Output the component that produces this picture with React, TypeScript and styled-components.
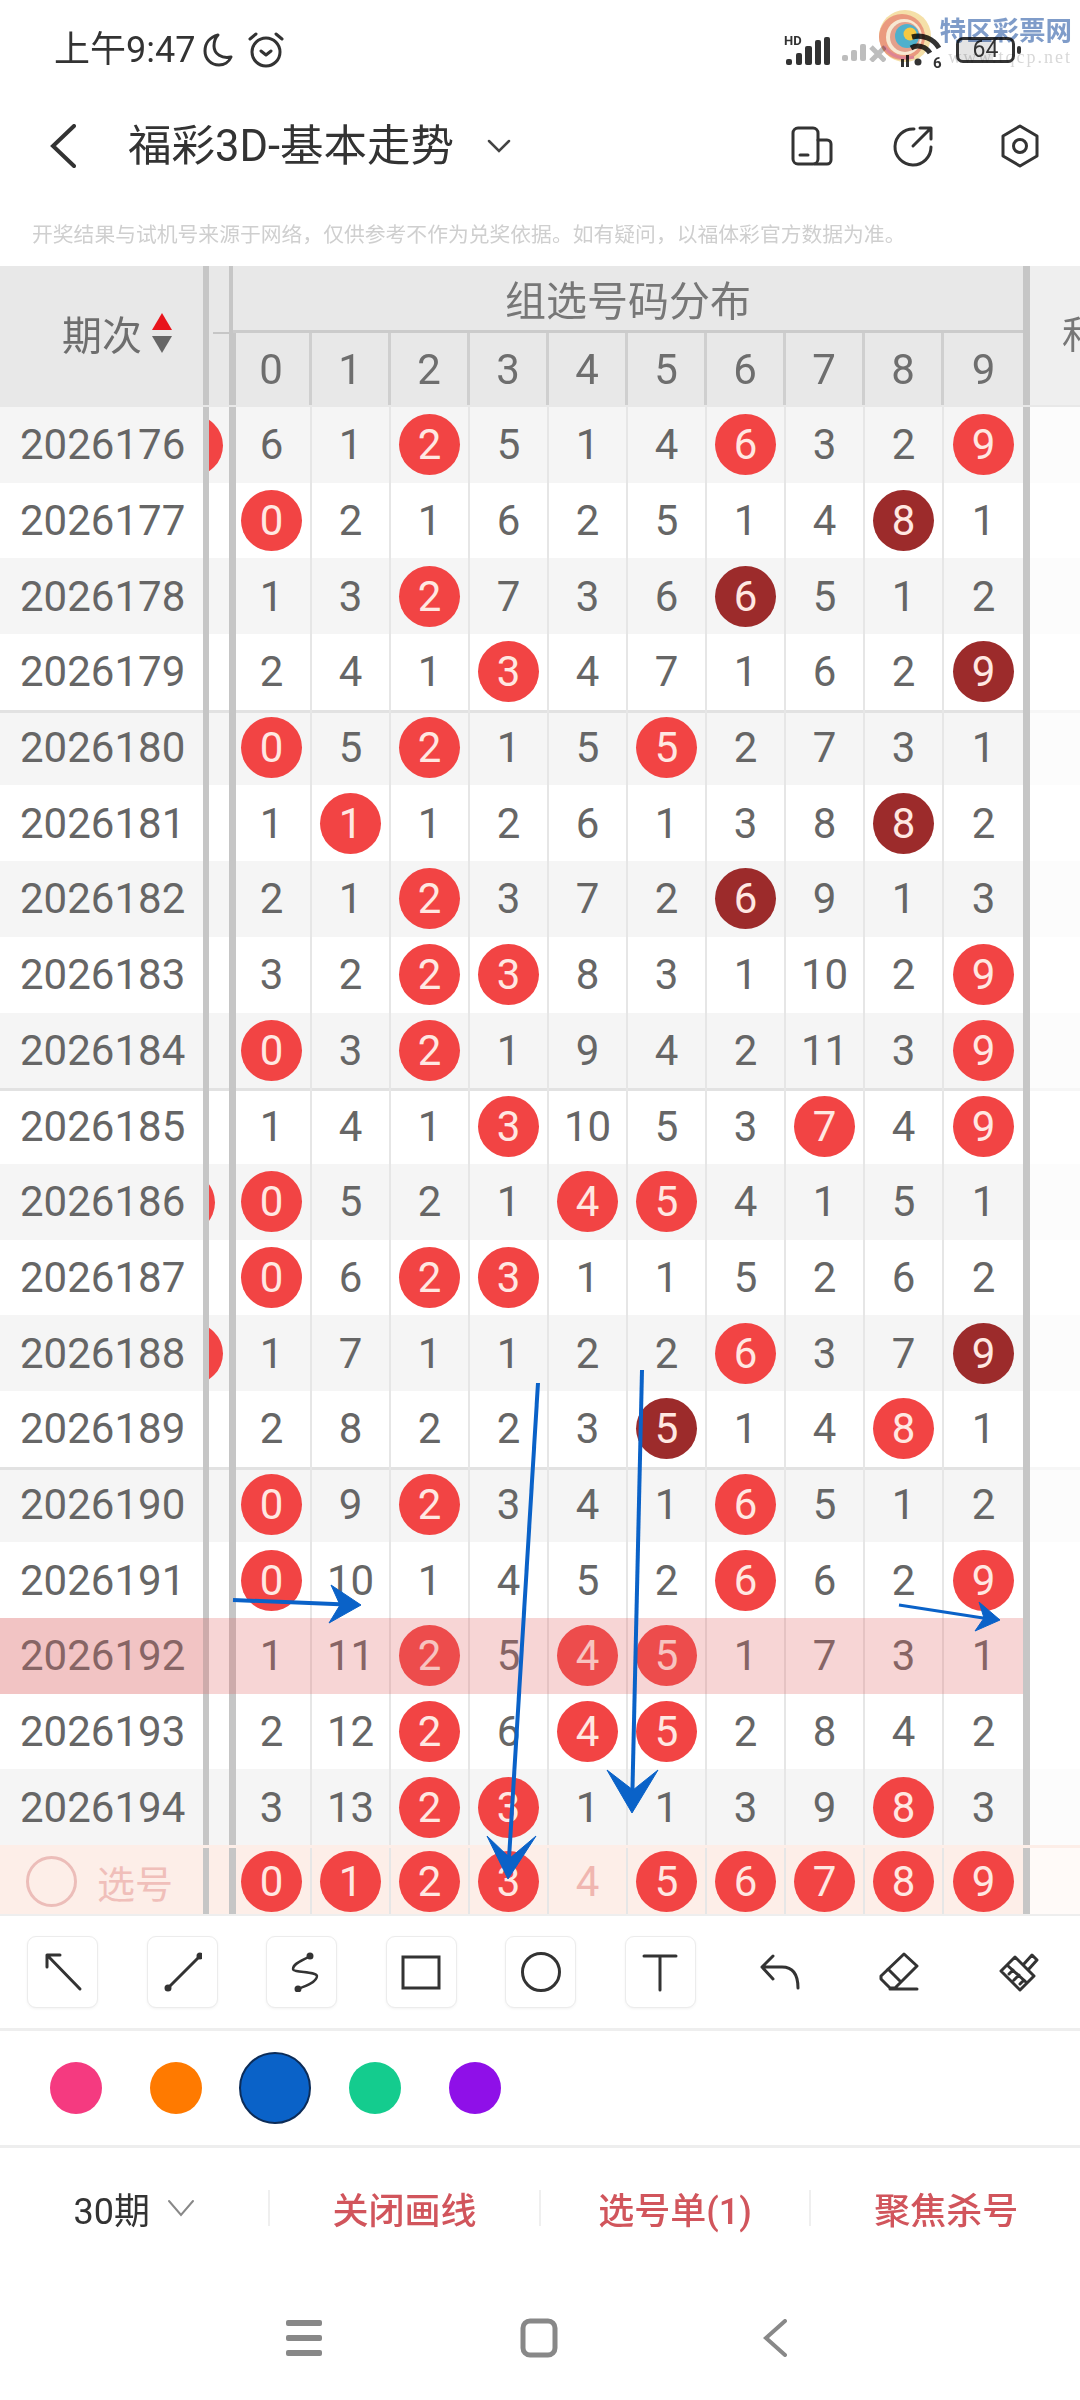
import styled, { createGlobalStyle } from "styled-components";

const CJK = `Roboto, "Noto Sans CJK SC", sans-serif`;

//#region --- Page styles ---
const GlobalStyle = createGlobalStyle`
  html, body {
    margin: 0;
    padding: 0;
    background: #fff;
    overflow: hidden;
  }
  * {
    box-sizing: border-box;
  }
`;

const Page = styled.div`
  position: relative;
  width: 1080px;
  height: 2400px;
  overflow: hidden;
  background: #fff;
  font-family: ${CJK};
  color: #333;
`;

const StatusBar = styled.header`
  display: flex;
  align-items: center;
  height: 100px;
  padding: 0 65px 0 54px;
`;

const Clock = styled.span`
  font-size: 36px;
  line-height: 1;
  color: #333;
  margin-right: 8px;
`;

const StatusIcon = styled.svg`
  display: block;
  margin-right: 14px;
`;

const StatusRight = styled.div`
  display: flex;
  align-items: center;
  gap: 12px;
  margin-left: auto;
`;

const Battery = styled.div`
  position: relative;
  width: 59px;
  height: 26px;
  border: 3px solid #333;
  border-radius: 7px;
  background: linear-gradient(90deg, #e4e4e4 64%, #fff 64%);
  font-size: 23px;
  line-height: 20px;
  text-align: center;
  color: #333;

  &::after {
    content: "";
    position: absolute;
    top: 6px;
    right: -9px;
    width: 4px;
    height: 8px;
    border-radius: 2px;
    background: #333;
  }
`;

const Watermark = styled.div`
  position: absolute;
  top: 8px;
  left: 878px;
  display: flex;
  gap: 6px;
  mix-blend-mode: multiply;
`;

const WatermarkText = styled.div`
  display: flex;
  flex-direction: column;
  align-items: flex-end;
  width: 134px;
`;

const WatermarkTitle = styled.span`
  margin-top: 7px;
  font-size: 26.5px;
  line-height: 32px;
  font-weight: 700;
  white-space: nowrap;
  color: #7f9cc9;
`;

const WatermarkUrl = styled.span`
  font-family: "Liberation Serif", serif;
  font-size: 18px;
  line-height: 20px;
  letter-spacing: 2px;
  white-space: nowrap;
  color: #d8d8d8;
`;

const NavBar = styled.nav`
  display: flex;
  align-items: center;
  height: 92px;
  padding-left: 50px;
`;

const NavTitle = styled.h1`
  margin: 2px 0 0 52px;
  font-size: 43.5px;
  line-height: 1;
  font-weight: 400;
  color: #333;
  white-space: nowrap;
`;

const NavCaret = styled.svg`
  margin-left: 33px;
`;

const NavActions = styled.div`
  display: flex;
  align-items: center;
  gap: 60px;
  margin-left: auto;
  padding-right: 40px;
`;

const HexIcon = styled.svg`
  margin-left: 5px;
`;

const Disclaimer = styled.p`
  margin: 0;
  height: 74px;
  padding: 31px 0 0 32px;
  font-size: 20.8px;
  line-height: 24px;
  color: #cfcfcf;
  white-space: nowrap;
`;

const Table = styled.section`
  width: 1080px;
`;

const HeadGrid = styled.div`
  display: grid;
  grid-template-columns: 209px 24px repeat(10, 79px) 7px 1fr;
  grid-template-rows: 67px 74px;
  height: 141px;
  background: #e8e8e8;
  color: #6e6e6e;
`;

const HeadPeriod = styled.div`
  grid-row: 1 / 3;
  display: flex;
  align-items: center;
  justify-content: flex-end;
  gap: 10px;
  height: 139px;
  padding: 0 31px 5px 0;
  border-right: 6px solid #c6c6c6;
  font-size: 40px;
`;

const SortArrows = styled.svg`
  display: block;
`;

const HeadGap = styled.div`
  grid-row: 1 / 3;
  position: relative;
  height: 139px;
  border-right: 4px solid #c6c6c6;

  &::after {
    content: "";
    position: absolute;
    top: 66px;
    left: 4px;
    right: 0;
    height: 2px;
    background: #c6c6c6;
  }
`;

const HeadTitle = styled.div`
  grid-column: 3 / 13;
  display: flex;
  align-items: center;
  justify-content: center;
  border-bottom: 3px solid #cbcbcb;
  font-size: 41px;
  color: #777;
`;

const HeadDigit = styled.div<{ $column: number }>`
  grid-row: 2;
  grid-column: ${(p) => p.$column + 3};
  display: flex;
  align-items: center;
  justify-content: center;
  height: 72px;
  border-right: ${(p) => (p.$column === 9 ? "0" : "3px solid #cfcfcf")};
  box-shadow: ${(p) => (p.$column === 0 ? "inset 3px 0 0 #c6c6c6" : "none")};
  font-size: 42px;
`;

const HeadBar = styled.div`
  grid-column: 13;
  grid-row: 1 / 3;
  height: 139px;
  background: #c6c6c6;
`;

const HeadTail = styled.div`
  grid-column: 14;
  grid-row: 1 / 3;
  height: 139px;
  padding-left: 32px;
  background: #efefef;
  font-size: 38px;
  line-height: 139px;
  white-space: nowrap;
  overflow: hidden;
  color: #777;
`;

const Row = styled.div<{ $striped: boolean; $grouped: boolean; $hot: boolean }>`
  position: relative;
  display: grid;
  grid-template-columns: 209px 24px repeat(10, 79px) 7px 1fr;
  height: 75.7px;
  background: ${(p) => (p.$striped && !p.$hot ? "#f5f5f5" : "#fff")};
  box-shadow: ${(p) => (p.$grouped ? "inset 0 3px 0 #e2e2e2" : "none")};

  ${(p) =>
    p.$hot &&
    `
    &::after {
      content: "";
      position: absolute;
      top: 0;
      bottom: 0;
      left: 0;
      width: 1023px;
      background: rgba(225, 100, 100, 0.27);
    }
  `}
`;

const PickRow = styled(Row)`
  height: 71px;
  padding-top: 3px;
  background: #fdeee8;
  border-bottom: 2px solid #eee;
`;

const Period = styled.div<{ $hot?: boolean }>`
  display: flex;
  align-items: center;
  padding-left: 20px;
  border-right: 6px solid #c6c6c6;
  font-size: 42px;
  color: #666;
  background: ${(p) => (p.$hot ? "#f8e8e8" : "transparent")};
`;

const PickLabel = styled.div`
  display: flex;
  align-items: center;
  gap: 20px;
  padding-left: 26px;
  border-right: 6px solid #c6c6c6;
  font-size: 38px;
  color: #f0bfba;
`;

const PickCircle = styled.span`
  width: 51px;
  height: 51px;
  border: 3px solid #ecbdb9;
  border-radius: 50%;
`;

const Gap = styled.div`
  position: relative;
  overflow: hidden;
  border-right: 4px solid #c6c6c6;
`;

const GapBall = styled.span<{ $right: number }>`
  position: absolute;
  top: 50%;
  right: ${(p) => p.$right}px;
  width: 61px;
  height: 61px;
  margin-top: -30px;
  border-radius: 50%;
  background: #f24444;
`;

const Cell = styled.div`
  display: flex;
  align-items: center;
  justify-content: center;
  border-right: 2px solid #e6e6e6;
  font-size: 42px;
  color: #666;

  &:nth-child(3) {
    box-shadow: inset 3px 0 0 #c6c6c6;
  }

  &:nth-child(12) {
    border-right: 0;
  }
`;

const Ball = styled.span<{ $dark?: boolean }>`
  display: flex;
  align-items: center;
  justify-content: center;
  flex: none;
  width: 61px;
  height: 61px;
  border-radius: 50%;
  background: ${(p) => (p.$dark ? "#9c2b2b" : "#f24444")};
  color: #ffe8e2;
`;

const FaintDigit = styled.span`
  color: #f0b6b0;
`;

const RightBar = styled.div`
  background: #c6c6c6;
`;

const Tail = styled.div`
  background: rgba(255, 255, 255, 0.7);
`;

const Tools = styled.div`
  display: grid;
  grid-template-columns: repeat(9, 71px);
  column-gap: 48.5px;
  height: 115px;
  padding: 20px 0 0 27px;
  border-bottom: 3px solid #eeeeee;
`;

const Tool = styled.button<{ $boxed?: boolean }>`
  display: flex;
  align-items: center;
  justify-content: center;
  width: 71px;
  height: 72px;
  padding: 0;
  background: #fff;
  border: ${(p) => (p.$boxed ? "1px solid #ececec" : "0")};
  border-radius: 9px;
  box-shadow: ${(p) => (p.$boxed ? "0 1px 3px rgba(0, 0, 0, 0.05)" : "none")};
`;

const Swatches = styled.div`
  display: grid;
  grid-template-columns: repeat(5, 99.8px);
  align-items: center;
  justify-items: center;
  height: 117px;
  padding-left: 26px;
  border-bottom: 3px solid #eeeeee;
`;

const Swatch = styled.span<{ $color: string; $active?: boolean }>`
  width: ${(p) => (p.$active ? 72 : 52)}px;
  height: ${(p) => (p.$active ? 72 : 52)}px;
  border-radius: 50%;
  background: ${(p) => p.$color};
  border: ${(p) => (p.$active ? "2px solid #0c2c58" : "0")};
`;

const ActionBar = styled.div`
  display: grid;
  grid-template-columns: repeat(4, 270.4px);
  align-items: center;
  height: 125px;
  padding-bottom: 5px;
`;

const Action = styled.div<{ $plain?: boolean }>`
  display: flex;
  align-items: center;
  justify-content: center;
  gap: 17px;
  height: 36px;
  border-right: 2px solid #efefef;
  font-size: 36px;
  font-weight: ${(p) => (p.$plain ? 400 : 500)};
  color: ${(p) => (p.$plain ? "#333" : "#d1555c")};

  &:last-child {
    border-right: 0;
  }
`;

const SystemNav = styled.div`
  display: grid;
  grid-template-columns: repeat(3, 235.5px);
  justify-items: center;
  align-items: center;
  height: 130px;
  padding: 0 0 0 186px;
`;

const ArrowLayer = styled.svg`
  position: absolute;
  top: 0;
  left: 0;
  z-index: 2;
  pointer-events: none;
`;
//#endregion

const ROWS: { id: number; gap?: number; cells: string[] }[] = [
  { id: 2026176, gap: 6, cells: ["6", "1", "r2", "5", "1", "4", "r6", "3", "2", "r9"] },
  { id: 2026177, cells: ["r0", "2", "1", "6", "2", "5", "1", "4", "d8", "1"] },
  { id: 2026178, cells: ["1", "3", "r2", "7", "3", "6", "d6", "5", "1", "2"] },
  { id: 2026179, cells: ["2", "4", "1", "r3", "4", "7", "1", "6", "2", "d9"] },
  { id: 2026180, cells: ["r0", "5", "r2", "1", "5", "r5", "2", "7", "3", "1"] },
  { id: 2026181, cells: ["1", "r1", "1", "2", "6", "1", "3", "8", "d8", "2"] },
  { id: 2026182, cells: ["2", "1", "r2", "3", "7", "2", "d6", "9", "1", "3"] },
  { id: 2026183, cells: ["3", "2", "r2", "r3", "8", "3", "1", "10", "2", "r9"] },
  { id: 2026184, cells: ["r0", "3", "r2", "1", "9", "4", "2", "11", "3", "r9"] },
  { id: 2026185, cells: ["1", "4", "1", "r3", "10", "5", "3", "r7", "4", "r9"] },
  { id: 2026186, gap: 14, cells: ["r0", "5", "2", "1", "r4", "r5", "4", "1", "5", "1"] },
  { id: 2026187, cells: ["r0", "6", "r2", "r3", "1", "1", "5", "2", "6", "2"] },
  { id: 2026188, gap: 6, cells: ["1", "7", "1", "1", "2", "2", "r6", "3", "7", "d9"] },
  { id: 2026189, cells: ["2", "8", "2", "2", "3", "d5", "1", "4", "r8", "1"] },
  { id: 2026190, cells: ["r0", "9", "r2", "3", "4", "1", "r6", "5", "1", "2"] },
  { id: 2026191, cells: ["r0", "10", "1", "4", "5", "2", "r6", "6", "2", "r9"] },
  { id: 2026192, cells: ["1", "11", "r2", "5", "r4", "r5", "1", "7", "3", "1"] },
  { id: 2026193, cells: ["2", "12", "r2", "6", "r4", "r5", "2", "8", "4", "2"] },
  { id: 2026194, cells: ["3", "13", "r2", "r3", "1", "1", "3", "9", "r8", "3"] },
];

const HOT_ROW = 2026192;
const GROUP_STARTS = [2026180, 2026185, 2026190];
const SWATCHES = ["#f53a80", "#ff7a00", "#0a62c8", "#14cc8e", "#8f10e8"];

const renderValue = (value: string) => {
  if (value[0] === "r") return <Ball>{value.slice(1)}</Ball>;
  if (value[0] === "d") return <Ball $dark>{value.slice(1)}</Ball>;
  return value;
};

const stroke = {
  fill: "none",
  stroke: "#333",
  strokeWidth: 3,
  strokeLinecap: "round" as const,
  strokeLinejoin: "round" as const,
};

const ToolIcon = ({ children }: { children: React.ReactNode }) => (
  <svg width="40" height="40" viewBox="0 0 40 40" {...stroke}>
    {children}
  </svg>
);

const App = () => {
  return (
    <Page>
      <GlobalStyle />
      <StatusBar>
        <Clock>上午9:47</Clock>
        <StatusIcon width="30" height="34" viewBox="0 0 30 34" {...stroke}>
          <path d="M15 2C7 4 2 10 2 18c0 8 6 14 14 14 5 0 10-3 12-8-9 2-17-3-17-11 0-5 1-8 4-11Z" />
        </StatusIcon>
        <StatusIcon width="38" height="36" viewBox="0 0 38 36" {...stroke}>
          <circle cx="19" cy="20" r="14" />
          <path d="M3 7l6-5M35 7l-6-5M14 19l5 4 5-4" />
        </StatusIcon>
        <StatusRight>
          <svg width="46" height="32" viewBox="0 0 46 32">
            <text x="0" y="11" fontFamily="Roboto, sans-serif" fontSize="13" fontWeight="700" fill="#333">
              HD
            </text>
            <rect x="2" y="25" width="6" height="6" rx="2" fill="#333" />
            <rect x="12" y="19" width="6" height="12" rx="2" fill="#333" />
            <rect x="21" y="12" width="7" height="19" rx="2" fill="#333" />
            <rect x="31" y="6" width="6" height="25" rx="2" fill="#333" />
            <rect x="40" y="3" width="6" height="28" rx="2" fill="#333" />
          </svg>
          <svg width="44" height="24" viewBox="0 0 44 24" fill="#bdbdbd">
            <rect x="0" y="17" width="6" height="6" rx="2" />
            <rect x="9" y="12" width="6" height="11" rx="2" />
            <rect x="18" y="6" width="6" height="17" rx="2" />
            <path d="M29 9l14 14M43 9L29 23" stroke="#bdbdbd" strokeWidth="5" fill="none" />
          </svg>
          <svg width="46" height="38" viewBox="0 0 46 38" fill="none" stroke="#333" strokeWidth="5">
            <path d="M13 17A14 14 0 0 1 32 22M14 6A24 24 0 0 1 41 17" />
            <circle cx="20" cy="31" r="3.5" fill="#333" stroke="none" />
            <rect x="3" y="28" width="3" height="8" fill="#333" stroke="none" />
            <rect x="8" y="24" width="3" height="12" fill="#333" stroke="none" />
            <text x="35" y="37" fontFamily="Roboto, sans-serif" fontSize="15" fontWeight="700" fill="#333" stroke="none">
              6
            </text>
          </svg>
          <Battery>64</Battery>
        </StatusRight>
      </StatusBar>

      <Watermark>
        <svg width="54" height="60" viewBox="0 0 54 60">
          <circle cx="27" cy="28" r="26" fill="#f5e0a8" />
          <circle cx="24" cy="29" r="23" fill="#ea9a7e" />
          <circle cx="26" cy="29" r="18" fill="#f7e8d2" />
          <circle cx="27" cy="29" r="15" fill="#e3a08c" />
          <circle cx="29" cy="28" r="12" fill="#4fb0cc" />
          <circle cx="32" cy="26" r="6.5" fill="#f5c842" />
          <path d="M6 38c6 10 18 14 30 11" fill="none" stroke="#dd8494" strokeWidth="3" />
        </svg>
        <WatermarkText>
          <WatermarkTitle>特区彩票网</WatermarkTitle>
          <WatermarkUrl>www.tqcp.net</WatermarkUrl>
        </WatermarkText>
      </Watermark>

      <NavBar>
        <svg width="26" height="44" viewBox="0 0 26 44" fill="none" stroke="#333" strokeWidth="4" strokeLinecap="round">
          <path d="M24 2L3 22l21 20" />
        </svg>
        <NavTitle>福彩3D-基本走势</NavTitle>
        <NavCaret width="24" height="14" viewBox="0 0 24 14" fill="none" stroke="#444" strokeWidth="2.5" strokeLinecap="round">
          <path d="M2 2l10 10L22 2" />
        </NavCaret>
        <NavActions>
          <svg width="42" height="40" viewBox="0 0 42 40" {...stroke}>
            <rect x="2" y="2" width="25" height="36" rx="5" />
            <path d="M27 14h9a4 4 0 0 1 4 4v16a4 4 0 0 1-4 4H24M9 29h8" />
          </svg>
          <svg width="42" height="42" viewBox="0 0 42 42" {...stroke}>
            <path d="M21 4A18 18 0 1 0 38 22M20 21L38 3M27 3h11v11" />
          </svg>
          <HexIcon width="40" height="44" viewBox="0 0 40 44" {...stroke}>
            <path d="M20 2l17 10v20L20 42 3 32V12Z" />
            <circle cx="20" cy="22" r="6.5" />
          </HexIcon>
        </NavActions>
      </NavBar>

      <Disclaimer>开奖结果与试机号来源于网络，仅供参考不作为兑奖依据。如有疑问，以福体彩官方数据为准。</Disclaimer>

      <Table>
        <HeadGrid>
          <HeadPeriod>
            期次
            <SortArrows width="20" height="40" viewBox="0 0 20 40">
              <path d="M10 0l10 17H0Z" fill="#e8141c" />
              <path d="M0 23h20L10 40Z" fill="#666" />
            </SortArrows>
          </HeadPeriod>
          <HeadGap />
          <HeadTitle>组选号码分布</HeadTitle>
          {[0, 1, 2, 3, 4, 5, 6, 7, 8, 9].map((digit) => (
            <HeadDigit key={digit} $column={digit}>
              {digit}
            </HeadDigit>
          ))}
          <HeadBar />
          <HeadTail>和</HeadTail>
        </HeadGrid>

        {ROWS.map((row, index) => (
          <Row
            key={row.id}
            $striped={index % 2 === 0}
            $grouped={GROUP_STARTS.includes(row.id)}
            $hot={row.id === HOT_ROW}
          >
            <Period $hot={row.id === HOT_ROW}>{row.id}</Period>
            <Gap>{row.gap !== undefined && <GapBall $right={row.gap} />}</Gap>
            {row.cells.map((value, cellIndex) => (
              <Cell key={cellIndex}>{renderValue(value)}</Cell>
            ))}
            <RightBar />
            <Tail />
          </Row>
        ))}

        <PickRow $striped={false} $grouped={false} $hot={false}>
          <PickLabel>
            <PickCircle />
            选号
          </PickLabel>
          <Gap />
          {["r0", "r1", "r2", "r3", "4", "r5", "r6", "r7", "r8", "r9"].map((value) => (
            <Cell key={value}>{value === "4" ? <FaintDigit>4</FaintDigit> : renderValue(value)}</Cell>
          ))}
          <RightBar />
          <Tail />
        </PickRow>
      </Table>

      <Tools>
        <Tool $boxed>
          <ToolIcon>
            <path d="M4 15V3H17M4 3L37 37" />
          </ToolIcon>
        </Tool>
        <Tool $boxed>
          <ToolIcon>
            <path d="M6 36L38 4" />
            <circle cx="6" cy="36" r="2" fill="#333" />
            <circle cx="38" cy="4" r="2" fill="#333" />
          </ToolIcon>
        </Tool>
        <Tool $boxed>
          <ToolIcon>
            <path d="M28 4C22 8 11 11 11 17C11 21 34 19 35 24C35 30 24 34 16 37" strokeWidth="2.4" />
            <circle cx="28" cy="4" r="2" fill="#333" />
            <circle cx="16" cy="37" r="2" fill="#333" />
          </ToolIcon>
        </Tool>
        <Tool $boxed>
          <ToolIcon>
            <rect x="2" y="5" width="36" height="31" strokeLinejoin="miter" />
          </ToolIcon>
        </Tool>
        <Tool $boxed>
          <ToolIcon>
            <circle cx="20" cy="20" r="18.5" />
          </ToolIcon>
        </Tool>
        <Tool $boxed>
          <ToolIcon>
            <path d="M4 4H36M20 4V38" />
          </ToolIcon>
        </Tool>
        <Tool>
          <ToolIcon>
            <path d="M13 4L2 15L13 27M2 15H22C32 15 38 21 38 36" />
          </ToolIcon>
        </Tool>
        <Tool>
          <ToolIcon>
            <path d="M25 2L38 14L16 36H11L2 27V24ZM9 17L22 30M11 37H38" />
          </ToolIcon>
        </Tool>
        <Tool>
          <ToolIcon>
            <path d="M2 19L16 5L35 24L21 38ZM24 13L33 3L38 8L29 18M8 13L28 31M14 18L10 22M20 23L15 28M25 28L21 32" />
          </ToolIcon>
        </Tool>
      </Tools>

      <Swatches>
        {SWATCHES.map((color, index) => (
          <Swatch key={color} $color={color} $active={index === 2} />
        ))}
      </Swatches>

      <ActionBar>
        <Action $plain>
          30期
          <svg width="28" height="18" viewBox="0 0 28 18" fill="none" stroke="#888" strokeWidth="2" strokeLinecap="round">
            <path d="M2 2l12 14L26 2" />
          </svg>
        </Action>
        <Action>关闭画线</Action>
        <Action>选号单(1)</Action>
        <Action>聚焦杀号</Action>
      </ActionBar>

      <SystemNav>
        <svg width="36" height="36" viewBox="0 0 36 36" fill="#888">
          <rect x="0" y="0" width="36" height="6" rx="2" />
          <rect x="0" y="15" width="36" height="6" rx="2" />
          <rect x="0" y="30" width="36" height="6" rx="2" />
        </svg>
        <svg width="38" height="40" viewBox="0 0 38 40" fill="none" stroke="#888" strokeWidth="5">
          <rect x="3" y="3" width="32" height="34" rx="7" />
        </svg>
        <svg width="24" height="38" viewBox="0 0 24 38" fill="none" stroke="#888" strokeWidth="4" strokeLinecap="round">
          <path d="M22 2L3 19l19 17" />
        </svg>
      </SystemNav>

      <ArrowLayer width="1080" height="2400" viewBox="0 0 1080 2400">
        <g fill="#0a62c8" stroke="#0a62c8">
          <path d="M538 1383L508 1875" strokeWidth="4" />
          <path d="M487 1836L508 1879L536 1836L510 1858Z" strokeWidth="1" />
          <path d="M642 1370L632 1810" strokeWidth="4" />
          <path d="M607 1770L632 1813L658 1770L633 1790Z" strokeWidth="1" />
          <path d="M233 1600L358 1605" strokeWidth="4" />
          <path d="M331 1585L361 1605L329 1623L340 1605Z" strokeWidth="1" />
          <path d="M899 1605L996 1620" strokeWidth="3" />
          <path d="M979 1602L1000 1620L975 1631L984 1618Z" strokeWidth="1" />
        </g>
      </ArrowLayer>
    </Page>
  );
};

export default App;
